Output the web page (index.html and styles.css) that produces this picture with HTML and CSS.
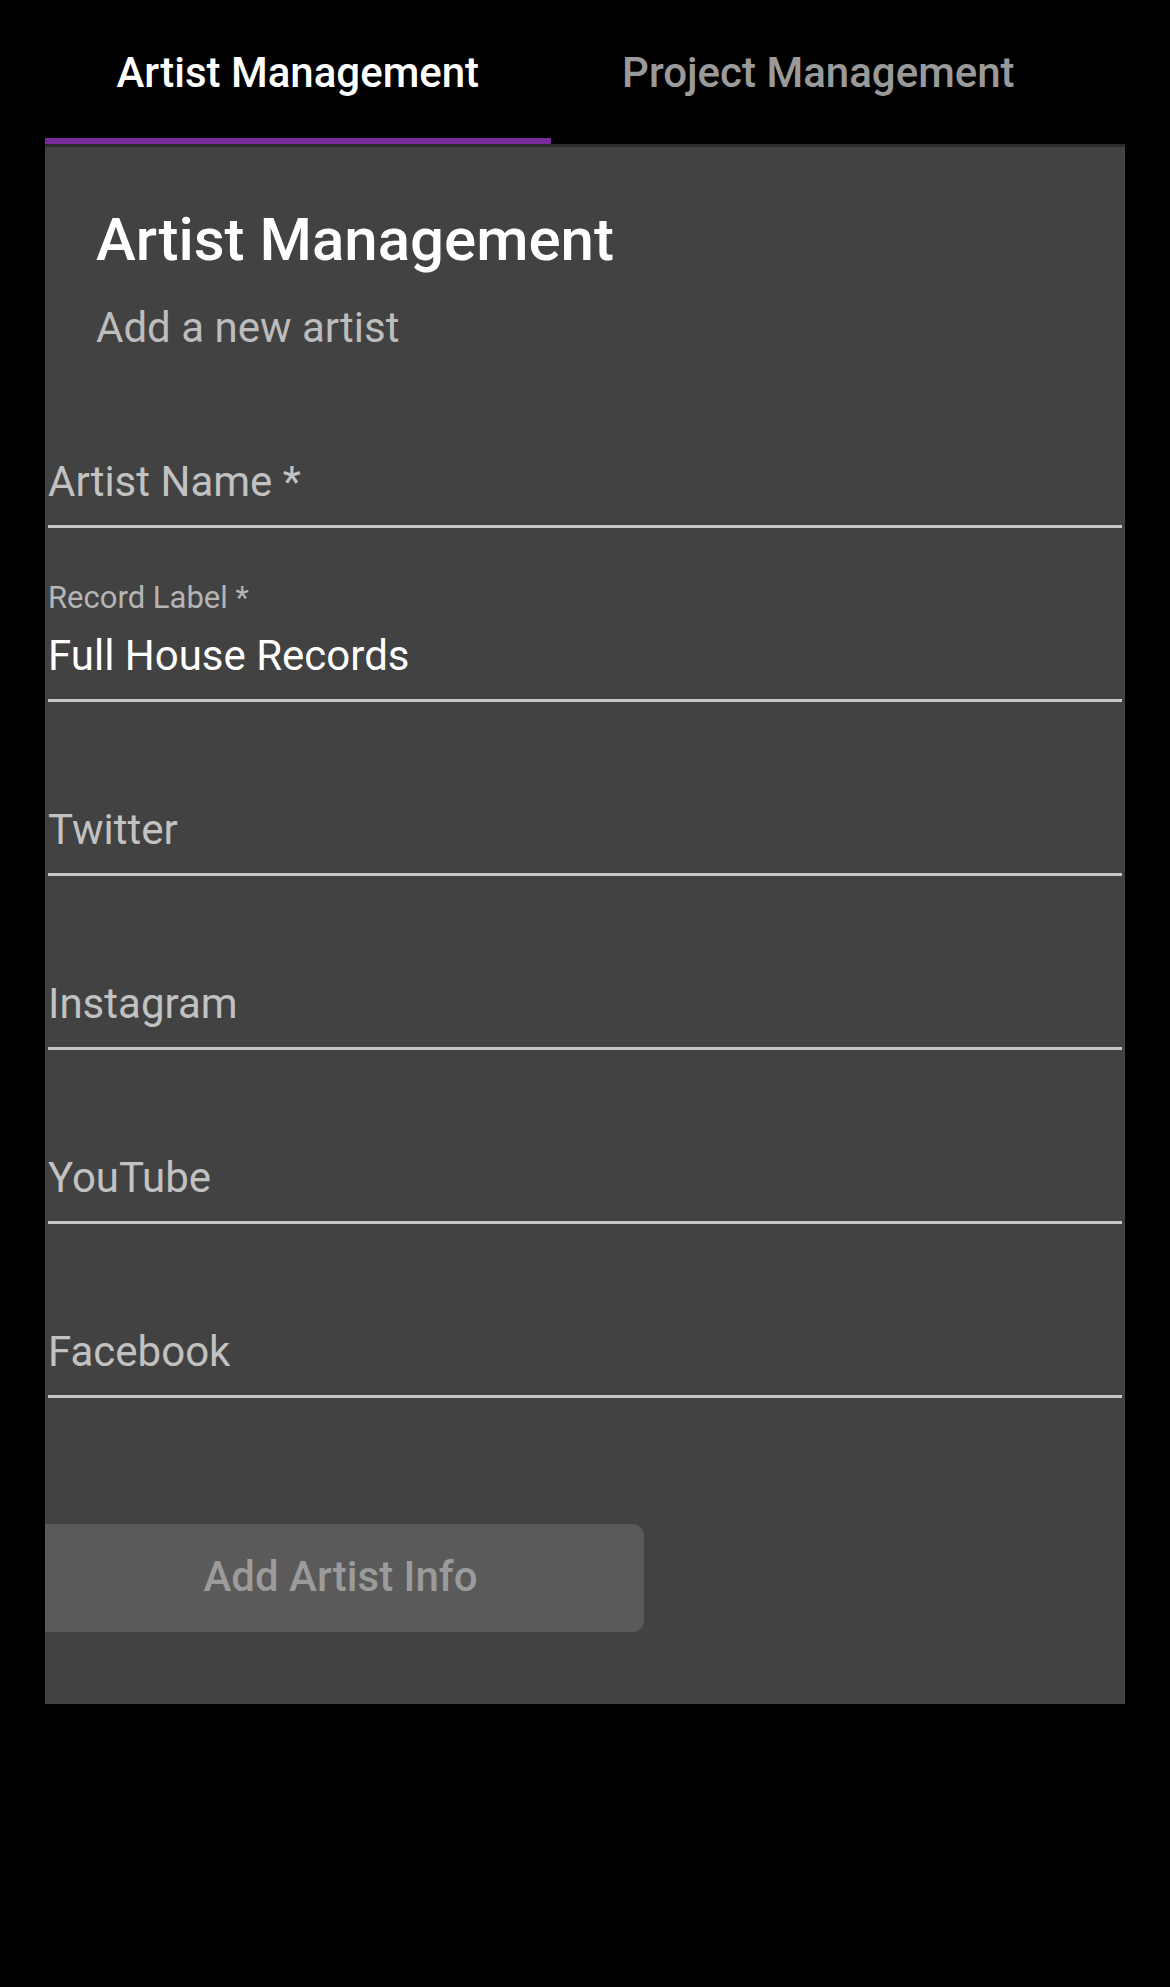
FILE: index.html
```html
<!DOCTYPE html>
<html lang="en">
<head>
<meta charset="utf-8">
<title>Artist Management</title>
<link rel="stylesheet" href="styles.css">
</head>
<body>
<div class="page">
  <nav class="tabs">
    <div class="tab tab-active">Artist Management</div>
    <div class="tab">Project Management</div>
  </nav>
  <div class="tab-rule"></div>
  <section class="card">
    <header class="card-head">
      <h1 class="title">Artist Management</h1>
      <p class="subtitle">Add a new artist</p>
    </header>
    <form class="fields">
      <div class="field"><div class="value placeholder">Artist Name *</div></div>
      <div class="field">
        <div class="label">Record Label *</div>
        <div class="value">Full House Records</div>
      </div>
      <div class="field"><div class="value placeholder">Twitter</div></div>
      <div class="field"><div class="value placeholder">Instagram</div></div>
      <div class="field"><div class="value placeholder">YouTube</div></div>
      <div class="field"><div class="value placeholder">Facebook</div></div>
    </form>
    <div class="actions">
      <button class="btn" type="button" disabled>Add Artist Info</button>
    </div>
  </section>
</div>
</body>
</html>
```

FILE: styles.css
```css
html, body {
  margin: 0;
  padding: 0;
  background: #000;
}
body {
  font-family: Roboto, "Liberation Sans", sans-serif;
  color: #fff;
}
.page {
  padding: 0 45px;
}
.tabs {
  display: flex;
  height: 144px;
}
.tab {
  box-sizing: border-box;
  height: 144px;
  padding: 49px 71.5px 0;
  font-size: 42px;
  line-height: 48px;
  font-weight: 500;
  color: #9a9a9a;
  white-space: nowrap;
  border-bottom: 6px solid transparent;
}
.tab-active {
  color: #fff;
  border-bottom-color: #7b2a9b;
}
.tab-rule {
  height: 3px;
  background: #2b2b2b;
}
.card {
  background: #424242;
  padding: 0 0 72px;
}
.card-head {
  padding: 57px 51px 0;
}
.title {
  margin: 0;
  font-size: 60px;
  line-height: 72px;
  font-weight: 500;
  color: #fff;
}
.subtitle {
  margin: 28px 0 0;
  font-size: 42px;
  line-height: 48px;
  font-weight: 400;
  color: #bdbdbd;
}
.fields {
  margin: 2px 3px 0;
  display: flex;
  flex-direction: column;
}
.field {
  box-sizing: border-box;
  height: 174px;
  border-bottom: 3px solid #c6c6c6;
  display: flex;
  flex-direction: column;
  justify-content: flex-end;
}
.label {
  font-size: 31px;
  line-height: 36px;
  color: #b5b5b5;
  margin-bottom: 16px;
}
.value {
  font-size: 42px;
  line-height: 48px;
  color: #fff;
  margin-bottom: 19px;
}
.placeholder {
  color: #c2c2c2;
}
.actions {
  padding-top: 126px;
}
.btn {
  display: block;
  width: 599px;
  height: 108px;
  border: 0;
  border-radius: 0 12px 12px 0;
  background: #5a5a5a;
  color: #9b9b9b;
  font-family: Roboto, "Liberation Sans", sans-serif;
  font-size: 42px;
  font-weight: 500;
  padding: 0 8px 4px 0;
}
```
